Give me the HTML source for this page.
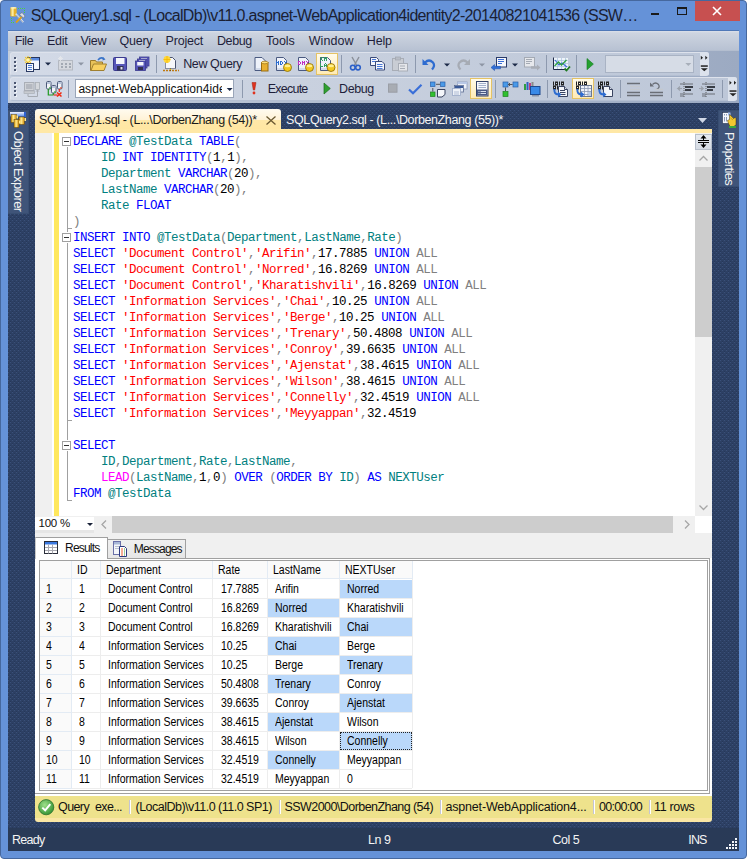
<!DOCTYPE html><html><head><meta charset="utf-8"><style>
*{margin:0;padding:0;box-sizing:border-box}
html,body{width:747px;height:859px;overflow:hidden;background:#FFFFFF}
body{position:relative;font-family:"Liberation Sans",sans-serif}
body>div,.a{position:absolute}
.t{position:absolute;white-space:pre}
svg{position:absolute;overflow:visible}
</style></head><body><div style="left:0px;top:0px;width:747px;height:859px;background:#6592D8;border:1px solid #46689E;border-radius:4px"></div>
<svg style="left:0;top:0" width="30" height="30" viewBox="0 0 30 30"><g fill="#4CD040"><rect x="18" y="8" width="1" height="1"/><rect x="20" y="8" width="1" height="1"/><rect x="22" y="8" width="1" height="1"/><rect x="24" y="8" width="1" height="1"/><rect x="24" y="10" width="1" height="1"/><rect x="24" y="12" width="1" height="1"/><rect x="11" y="18" width="1" height="1"/><rect x="11" y="20" width="1" height="1"/><rect x="11" y="22" width="1" height="1"/><rect x="13" y="22" width="1" height="1"/></g><rect x="10.3" y="7.5" width="6.4" height="9" rx="1" fill="#E9B42E"/><rect x="11.5" y="8" width="2.2" height="8" fill="#FCEBA0"/><ellipse cx="13.5" cy="7.8" rx="3.1" ry="0.9" fill="#FFF2B8"/><path d="M15.8 13.8L23.3 22.3" stroke="#E8ECF2" stroke-width="1.6"/><path d="M16.2 14.6L23 22.4" stroke="#606A78" stroke-width=".5"/><path d="M16 22.5L21.5 17" stroke="#E0A018" stroke-width="1.8"/><path d="M19.5 14.5l2.5-2l3 3.5l-1.5 2z" fill="#D8DCE4" stroke="#5A6270" stroke-width=".5"/></svg>
<div class="t" style="left:30.80px;top:7.86px;font-size:16px;line-height:16px;color:#1B1F33;letter-spacing:-0.689px;font-family:'Liberation Sans',monospace;">SQLQuery1.sql - (LocalDb)\v11.0.aspnet-WebApplication4identity2-20140821041536 (SSW…</div>
<div style="left:651px;top:13px;width:8px;height:2px;background:#1a1a1a"></div>
<div style="left:677px;top:7px;width:10px;height:8px;border:1px solid #1a1a1a;border-top-width:2px"></div>
<div style="left:695px;top:1px;width:45px;height:20px;background:#C75050"></div>
<svg style="left:712px;top:6px" width="10" height="10" viewBox="0 0 10 10"><path d="M1 1L9 9M9 1L1 9" stroke="#fff" stroke-width="1.6"/></svg>
<div style="left:8px;top:30px;width:731px;height:1px;background:#4F78B8"></div>
<div style="left:8px;top:31px;width:731px;height:20px;background:linear-gradient(#DCE0E9 0px,#CDD4E0 2px,#B8C2D3 19px,#AEB9CB 20px)"></div>
<div class="t" style="left:14.70px;top:35.32px;font-size:12.5px;line-height:12.5px;color:#1E1E3A;letter-spacing:-0.364px;font-family:'Liberation Sans',monospace;">File</div>
<div class="t" style="left:46.90px;top:35.32px;font-size:12.5px;line-height:12.5px;color:#1E1E3A;letter-spacing:-0.262px;font-family:'Liberation Sans',monospace;">Edit</div>
<div class="t" style="left:80.50px;top:35.32px;font-size:12.5px;line-height:12.5px;color:#1E1E3A;letter-spacing:-0.298px;font-family:'Liberation Sans',monospace;">View</div>
<div class="t" style="left:119.50px;top:35.32px;font-size:12.5px;line-height:12.5px;color:#1E1E3A;letter-spacing:-0.246px;font-family:'Liberation Sans',monospace;">Query</div>
<div class="t" style="left:165.50px;top:35.32px;font-size:12.5px;line-height:12.5px;color:#1E1E3A;letter-spacing:-0.187px;font-family:'Liberation Sans',monospace;">Project</div>
<div class="t" style="left:216.90px;top:35.32px;font-size:12.5px;line-height:12.5px;color:#1E1E3A;letter-spacing:-0.369px;font-family:'Liberation Sans',monospace;">Debug</div>
<div class="t" style="left:265.90px;top:35.32px;font-size:12.5px;line-height:12.5px;color:#1E1E3A;letter-spacing:-0.077px;font-family:'Liberation Sans',monospace;">Tools</div>
<div class="t" style="left:308.70px;top:35.32px;font-size:12.5px;line-height:12.5px;color:#1E1E3A;letter-spacing:0.072px;font-family:'Liberation Sans',monospace;">Window</div>
<div class="t" style="left:366.80px;top:35.32px;font-size:12.5px;line-height:12.5px;color:#1E1E3A;letter-spacing:-0.155px;font-family:'Liberation Sans',monospace;">Help</div>
<div style="left:8px;top:51px;width:731px;height:52px;background:linear-gradient(to right,#C3CDDC,#9CAAC2)"></div>
<div style="left:10px;top:52px;width:699px;height:24px;background:linear-gradient(to right,#D3DAE7,#C9D1DF 40%,#BDC7D8);border-radius:3px;border:1px solid #DDE2EC;border-bottom-color:#B4BFD2"></div>
<div style="left:14px;top:57px;width:2px;height:2px;background:#4A5570;box-shadow:1px 1px 0 #EEF2F8"></div>
<div style="left:14px;top:61px;width:2px;height:2px;background:#4A5570;box-shadow:1px 1px 0 #EEF2F8"></div>
<div style="left:14px;top:65px;width:2px;height:2px;background:#4A5570;box-shadow:1px 1px 0 #EEF2F8"></div>
<div style="left:14px;top:69px;width:2px;height:2px;background:#4A5570;box-shadow:1px 1px 0 #EEF2F8"></div>
<div style="left:700px;top:52px;width:9px;height:24px;background:#DCE2EC;border-radius:0 3px 3px 0"></div>
<div style="left:10px;top:77px;width:727px;height:24px;background:linear-gradient(to right,#D3DAE7,#C9D1DF 40%,#BDC7D8);border-radius:3px;border:1px solid #DDE2EC;border-bottom-color:#B4BFD2"></div>
<div style="left:14px;top:82px;width:2px;height:2px;background:#4A5570;box-shadow:1px 1px 0 #EEF2F8"></div>
<div style="left:14px;top:86px;width:2px;height:2px;background:#4A5570;box-shadow:1px 1px 0 #EEF2F8"></div>
<div style="left:14px;top:90px;width:2px;height:2px;background:#4A5570;box-shadow:1px 1px 0 #EEF2F8"></div>
<div style="left:14px;top:94px;width:2px;height:2px;background:#4A5570;box-shadow:1px 1px 0 #EEF2F8"></div>
<div style="left:728px;top:77px;width:9px;height:24px;background:#DCE2EC;border-radius:0 3px 3px 0"></div>
<div style="left:8px;top:103px;width:731px;height:725px;background-color:#2D4064;background-image:conic-gradient(from 90deg at 1px 1px,transparent 0 50%,#26385A 50% 75%,transparent 75%),conic-gradient(from 90deg at 1px 1px,transparent 0 50%,#26385A 50% 75%,transparent 75%),conic-gradient(from 90deg at 1px 2px,transparent 0 50%,#3A5079 50% 75%,transparent 75%),conic-gradient(from 90deg at 1px 2px,transparent 0 50%,#3A5079 50% 75%,transparent 75%);background-size:4px 4px;background-position:0 0,2px 2px,0 0,2px 2px"></div>
<div style="left:8px;top:828px;width:731px;height:23px;background:#293A57"></div>
<div class="t" style="left:12.00px;top:834.22px;font-size:12.5px;line-height:12.5px;color:#F4F4F4;letter-spacing:-0.728px;font-family:'Liberation Sans',monospace;">Ready</div>
<div class="t" style="left:368.10px;top:834.22px;font-size:12.5px;line-height:12.5px;color:#F4F4F4;letter-spacing:-0.482px;font-family:'Liberation Sans',monospace;">Ln 9</div>
<div class="t" style="left:552.50px;top:834.22px;font-size:12.5px;line-height:12.5px;color:#F4F4F4;letter-spacing:-0.498px;font-family:'Liberation Sans',monospace;">Col 5</div>
<div class="t" style="left:688.30px;top:834.22px;font-size:12.5px;line-height:12.5px;color:#F4F4F4;letter-spacing:-0.881px;font-family:'Liberation Sans',monospace;">INS</div>
<div style="left:735px;top:838px;width:2px;height:2px;background:#F2F5FA"></div>
<div style="left:732px;top:841px;width:2px;height:2px;background:#F2F5FA"></div>
<div style="left:735px;top:841px;width:2px;height:2px;background:#F2F5FA"></div>
<div style="left:729px;top:844px;width:2px;height:2px;background:#F2F5FA"></div>
<div style="left:732px;top:844px;width:2px;height:2px;background:#F2F5FA"></div>
<div style="left:735px;top:844px;width:2px;height:2px;background:#F2F5FA"></div>
<div style="left:726px;top:847px;width:2px;height:2px;background:#F2F5FA"></div>
<div style="left:729px;top:847px;width:2px;height:2px;background:#F2F5FA"></div>
<div style="left:732px;top:847px;width:2px;height:2px;background:#F2F5FA"></div>
<div style="left:735px;top:847px;width:2px;height:2px;background:#F2F5FA"></div>
<div style="left:8px;top:110px;width:20.5px;height:104px;background:#3F5479;border:1px solid #384E72;border-left:none"></div>
<div style="left:718px;top:110px;width:21px;height:77px;background:#3F5479;border:1px solid #384E72;border-right:none"></div>
<svg style="left:0;top:0" width="30" height="135" viewBox="0 0 30 135"><defs><linearGradient id="oeb" x1="0" x2="0" y1="0" y2="1"><stop offset="0" stop-color="#F0F4FF"/><stop offset="1" stop-color="#5A8CE8"/></linearGradient><linearGradient id="gold" x1="0" x2="1"><stop offset="0" stop-color="#D89A10"/><stop offset=".45" stop-color="#FFE68A"/><stop offset="1" stop-color="#D08A00"/></linearGradient></defs><rect x="10" y="112" width="16" height="4.5" fill="url(#oeb)"/><rect x="24" y="112" width="2" height="5" fill="#2F62D0"/><rect x="11" y="114.5" width="5.5" height="8" fill="url(#gold)" stroke="#5A4008" stroke-width=".5"/><rect x="16.5" y="115.5" width="1.5" height="3" fill="#FFE88A"/><rect x="19" y="117" width="5.5" height="7.5" fill="url(#gold)" stroke="#5A4008" stroke-width=".5"/><rect x="24.5" y="118" width="1.5" height="3" fill="#FFE88A"/><rect x="14" y="119.5" width="5" height="8" fill="url(#gold)" stroke="#5A4008" stroke-width=".5"/><rect x="19" y="120.5" width="1.5" height="3" fill="#FFE88A"/></svg>
<svg style="left:700px;top:100px" width="47" height="35" viewBox="700 100 47 35"><rect x="722.5" y="112.5" width="8" height="11" fill="#F4F7FC" stroke="#26334F" stroke-width=".6"/><rect x="728" y="112.5" width="2.5" height="3" fill="#9AB8EC"/><path d="M724.5 114v1.5M726.5 114v1.5M724.5 117v4.5M726.5 117v4.5" stroke="#8A98B8" stroke-width="1"/><path d="M729.5 114.5l4 4 1.5-1 1 1v6l-2 2h-4l-1.5-3 -1-3 2-1z" fill="#F2C830" stroke="#3A3010" stroke-width=".5"/><path d="M730 115l3 3M730.5 118l2.5 2" stroke="#B08A10" stroke-width=".6"/><rect x="729" y="126" width="7" height="2" fill="#3CA83C"/></svg>
<div class="t" style="left:11.6px;top:131.2px;width:90px;height:13px;transform-origin:0 0;transform:translate(13px,0) rotate(90deg);font-size:13px;line-height:13px;color:#F4F4F4;letter-spacing:-0.6px">Object Explorer</div>
<div class="t" style="left:722.5px;top:131.5px;width:60px;height:13px;transform-origin:0 0;transform:translate(13px,0) rotate(90deg);font-size:13px;line-height:13px;color:#F4F4F4;letter-spacing:-0.6px">Properties</div>
<div style="left:35px;top:109px;width:246px;height:24px;background:linear-gradient(#FFFBF0,#FFF2D6 46%,#FFE8A8 46%,#FFE6A0);border-radius:3px 3px 0 0"></div>
<div class="t" style="left:39.00px;top:113.72px;font-size:12.5px;line-height:12.5px;color:#1A1A1A;letter-spacing:-0.372px;font-family:'Liberation Sans',monospace;">SQLQuery1.sql - (L...\DorbenZhang (54))*</div>
<svg style="left:266px;top:116px" width="10" height="9" viewBox="0 0 10 9"><path d="M0.5 0.5L9.5 8.5M9.5 0.5L0.5 8.5" stroke="#6A5830" stroke-width="1.3"/></svg>
<div class="t" style="left:286.10px;top:113.72px;font-size:12.5px;line-height:12.5px;color:#F4F4F4;letter-spacing:-0.395px;font-family:'Liberation Sans',monospace;">SQLQuery2.sql - (L...\DorbenZhang (55))*</div>
<svg style="left:698px;top:118px" width="9" height="5" viewBox="0 0 9 5"><path d="M0 0H9L4.5 5Z" fill="#D0D8E6"/></svg>
<div style="left:35px;top:129px;width:677px;height:4px;background:#FFE8A6"></div>
<div style="left:35px;top:133px;width:677px;height:383px;background:#FFFFFF"></div>
<div style="left:35px;top:133px;width:17px;height:383px;background:#F0F0F0"></div>
<div style="left:54.3px;top:133px;width:5.2px;height:383px;background:#FFE85E"></div>
<div style="left:695px;top:133px;width:17px;height:383px;background:#F0F0F0"></div>
<div style="left:695px;top:133.5px;width:16.5px;height:16px;background:linear-gradient(#E6EAF0,#D4DAE3);border:1px solid #B8C0CC"></div>
<svg style="left:697px;top:134px" width="13" height="15" viewBox="0 0 13 15"><path d="M1 6.5H12M1 8.5H12" stroke="#000" stroke-width="1"/><path d="M6.5 1L3.5 4.5H9.5Z M6.5 14L3.5 10.5H9.5Z" fill="#000"/><path d="M6.5 3V6M6.5 9V12" stroke="#000"/></svg>
<svg style="left:699px;top:155px" width="9" height="6" viewBox="0 0 9 6"><path d="M0.5 5.5L4.5 1.5L8.5 5.5" stroke="#A6A6A6" stroke-width="1.3" fill="none"/></svg>
<div style="left:695px;top:167px;width:17px;height:170px;background:#CDCDCD"></div>
<svg style="left:699px;top:505px" width="9" height="6" viewBox="0 0 9 6"><path d="M0.5 0.5L4.5 4.5L8.5 0.5" stroke="#A6A6A6" stroke-width="1.3" fill="none"/></svg>
<div style="left:35px;top:516px;width:677px;height:17px;background:#F0F0F0"></div>
<div style="left:35px;top:516.5px;width:59px;height:13.5px;background:#FFFFFF"></div>
<div style="left:35px;top:530px;width:59px;height:3px;background:#E6E6E6"></div>
<div class="t" style="left:38.50px;top:518.07px;font-size:11.5px;line-height:11.5px;color:#111;letter-spacing:-0.216px;font-family:'Liberation Sans',monospace;">100 %</div>
<svg style="left:86.5px;top:523px" width="6" height="3" viewBox="0 0 6 3"><path d="M0 0H6L3 3Z" fill="#1A2238"/></svg>
<svg style="left:101px;top:520px" width="6" height="9" viewBox="0 0 6 9"><path d="M5 0.5L1 4.5L5 8.5" stroke="#A6A6A6" stroke-width="1.3" fill="none"/></svg>
<div style="left:112px;top:516px;width:561px;height:17px;background:#CDCDCD"></div>
<svg style="left:684px;top:520px" width="6" height="9" viewBox="0 0 6 9"><path d="M1 0.5L5 4.5L1 8.5" stroke="#A6A6A6" stroke-width="1.3" fill="none"/></svg>
<div style="left:695px;top:516px;width:17px;height:17px;background:#FFFFFF"></div>
<div class="t" style="left:73px;top:136.12px;font-family:'Liberation Mono',monospace;font-size:12.5px;line-height:12.5px;letter-spacing:-0.500px"><span style="color:#0000FF">DECLARE</span> <span style="color:#008080">@TestData</span> <span style="color:#0000FF">TABLE</span><span style="color:#808080">(</span></div>
<div class="t" style="left:73px;top:152.12px;font-family:'Liberation Mono',monospace;font-size:12.5px;line-height:12.5px;letter-spacing:-0.500px">    <span style="color:#008080">ID</span> <span style="color:#0000FF">INT</span> <span style="color:#0000FF">IDENTITY</span><span style="color:#808080">(</span><span style="color:#000000">1</span><span style="color:#808080">,</span><span style="color:#000000">1</span><span style="color:#808080">)</span><span style="color:#808080">,</span></div>
<div class="t" style="left:73px;top:168.12px;font-family:'Liberation Mono',monospace;font-size:12.5px;line-height:12.5px;letter-spacing:-0.500px">    <span style="color:#008080">Department</span> <span style="color:#0000FF">VARCHAR</span><span style="color:#808080">(</span><span style="color:#000000">20</span><span style="color:#808080">)</span><span style="color:#808080">,</span></div>
<div class="t" style="left:73px;top:184.12px;font-family:'Liberation Mono',monospace;font-size:12.5px;line-height:12.5px;letter-spacing:-0.500px">    <span style="color:#008080">LastName</span> <span style="color:#0000FF">VARCHAR</span><span style="color:#808080">(</span><span style="color:#000000">20</span><span style="color:#808080">)</span><span style="color:#808080">,</span></div>
<div class="t" style="left:73px;top:200.12px;font-family:'Liberation Mono',monospace;font-size:12.5px;line-height:12.5px;letter-spacing:-0.500px">    <span style="color:#008080">Rate</span> <span style="color:#0000FF">FLOAT</span></div>
<div class="t" style="left:73px;top:216.12px;font-family:'Liberation Mono',monospace;font-size:12.5px;line-height:12.5px;letter-spacing:-0.500px"><span style="color:#808080">)</span></div>
<div class="t" style="left:73px;top:232.12px;font-family:'Liberation Mono',monospace;font-size:12.5px;line-height:12.5px;letter-spacing:-0.500px"><span style="color:#0000FF">INSERT</span> <span style="color:#0000FF">INTO</span> <span style="color:#008080">@TestData</span><span style="color:#808080">(</span><span style="color:#008080">Department</span><span style="color:#808080">,</span><span style="color:#008080">LastName</span><span style="color:#808080">,</span><span style="color:#008080">Rate</span><span style="color:#808080">)</span></div>
<div class="t" style="left:73px;top:248.12px;font-family:'Liberation Mono',monospace;font-size:12.5px;line-height:12.5px;letter-spacing:-0.500px"><span style="color:#0000FF">SELECT</span> <span style="color:#FF0000">&#x27;Document Control&#x27;</span><span style="color:#808080">,</span><span style="color:#FF0000">&#x27;Arifin&#x27;</span><span style="color:#808080">,</span><span style="color:#000000">17.7885</span> <span style="color:#0000FF">UNION</span> <span style="color:#808080">ALL</span></div>
<div class="t" style="left:73px;top:264.12px;font-family:'Liberation Mono',monospace;font-size:12.5px;line-height:12.5px;letter-spacing:-0.500px"><span style="color:#0000FF">SELECT</span> <span style="color:#FF0000">&#x27;Document Control&#x27;</span><span style="color:#808080">,</span><span style="color:#FF0000">&#x27;Norred&#x27;</span><span style="color:#808080">,</span><span style="color:#000000">16.8269</span> <span style="color:#0000FF">UNION</span> <span style="color:#808080">ALL</span></div>
<div class="t" style="left:73px;top:280.12px;font-family:'Liberation Mono',monospace;font-size:12.5px;line-height:12.5px;letter-spacing:-0.500px"><span style="color:#0000FF">SELECT</span> <span style="color:#FF0000">&#x27;Document Control&#x27;</span><span style="color:#808080">,</span><span style="color:#FF0000">&#x27;Kharatishvili&#x27;</span><span style="color:#808080">,</span><span style="color:#000000">16.8269</span> <span style="color:#0000FF">UNION</span> <span style="color:#808080">ALL</span></div>
<div class="t" style="left:73px;top:296.12px;font-family:'Liberation Mono',monospace;font-size:12.5px;line-height:12.5px;letter-spacing:-0.500px"><span style="color:#0000FF">SELECT</span> <span style="color:#FF0000">&#x27;Information Services&#x27;</span><span style="color:#808080">,</span><span style="color:#FF0000">&#x27;Chai&#x27;</span><span style="color:#808080">,</span><span style="color:#000000">10.25</span> <span style="color:#0000FF">UNION</span> <span style="color:#808080">ALL</span></div>
<div class="t" style="left:73px;top:312.12px;font-family:'Liberation Mono',monospace;font-size:12.5px;line-height:12.5px;letter-spacing:-0.500px"><span style="color:#0000FF">SELECT</span> <span style="color:#FF0000">&#x27;Information Services&#x27;</span><span style="color:#808080">,</span><span style="color:#FF0000">&#x27;Berge&#x27;</span><span style="color:#808080">,</span><span style="color:#000000">10.25</span> <span style="color:#0000FF">UNION</span> <span style="color:#808080">ALL</span></div>
<div class="t" style="left:73px;top:328.12px;font-family:'Liberation Mono',monospace;font-size:12.5px;line-height:12.5px;letter-spacing:-0.500px"><span style="color:#0000FF">SELECT</span> <span style="color:#FF0000">&#x27;Information Services&#x27;</span><span style="color:#808080">,</span><span style="color:#FF0000">&#x27;Trenary&#x27;</span><span style="color:#808080">,</span><span style="color:#000000">50.4808</span> <span style="color:#0000FF">UNION</span> <span style="color:#808080">ALL</span></div>
<div class="t" style="left:73px;top:344.12px;font-family:'Liberation Mono',monospace;font-size:12.5px;line-height:12.5px;letter-spacing:-0.500px"><span style="color:#0000FF">SELECT</span> <span style="color:#FF0000">&#x27;Information Services&#x27;</span><span style="color:#808080">,</span><span style="color:#FF0000">&#x27;Conroy&#x27;</span><span style="color:#808080">,</span><span style="color:#000000">39.6635</span> <span style="color:#0000FF">UNION</span> <span style="color:#808080">ALL</span></div>
<div class="t" style="left:73px;top:360.12px;font-family:'Liberation Mono',monospace;font-size:12.5px;line-height:12.5px;letter-spacing:-0.500px"><span style="color:#0000FF">SELECT</span> <span style="color:#FF0000">&#x27;Information Services&#x27;</span><span style="color:#808080">,</span><span style="color:#FF0000">&#x27;Ajenstat&#x27;</span><span style="color:#808080">,</span><span style="color:#000000">38.4615</span> <span style="color:#0000FF">UNION</span> <span style="color:#808080">ALL</span></div>
<div class="t" style="left:73px;top:376.12px;font-family:'Liberation Mono',monospace;font-size:12.5px;line-height:12.5px;letter-spacing:-0.500px"><span style="color:#0000FF">SELECT</span> <span style="color:#FF0000">&#x27;Information Services&#x27;</span><span style="color:#808080">,</span><span style="color:#FF0000">&#x27;Wilson&#x27;</span><span style="color:#808080">,</span><span style="color:#000000">38.4615</span> <span style="color:#0000FF">UNION</span> <span style="color:#808080">ALL</span></div>
<div class="t" style="left:73px;top:392.12px;font-family:'Liberation Mono',monospace;font-size:12.5px;line-height:12.5px;letter-spacing:-0.500px"><span style="color:#0000FF">SELECT</span> <span style="color:#FF0000">&#x27;Information Services&#x27;</span><span style="color:#808080">,</span><span style="color:#FF0000">&#x27;Connelly&#x27;</span><span style="color:#808080">,</span><span style="color:#000000">32.4519</span> <span style="color:#0000FF">UNION</span> <span style="color:#808080">ALL</span></div>
<div class="t" style="left:73px;top:408.12px;font-family:'Liberation Mono',monospace;font-size:12.5px;line-height:12.5px;letter-spacing:-0.500px"><span style="color:#0000FF">SELECT</span> <span style="color:#FF0000">&#x27;Information Services&#x27;</span><span style="color:#808080">,</span><span style="color:#FF0000">&#x27;Meyyappan&#x27;</span><span style="color:#808080">,</span><span style="color:#000000">32.4519</span></div>
<div class="t" style="left:73px;top:424.12px;font-family:'Liberation Mono',monospace;font-size:12.5px;line-height:12.5px;letter-spacing:-0.500px"></div>
<div class="t" style="left:73px;top:440.12px;font-family:'Liberation Mono',monospace;font-size:12.5px;line-height:12.5px;letter-spacing:-0.500px"><span style="color:#0000FF">SELECT</span></div>
<div class="t" style="left:73px;top:456.12px;font-family:'Liberation Mono',monospace;font-size:12.5px;line-height:12.5px;letter-spacing:-0.500px">    <span style="color:#008080">ID</span><span style="color:#808080">,</span><span style="color:#008080">Department</span><span style="color:#808080">,</span><span style="color:#008080">Rate</span><span style="color:#808080">,</span><span style="color:#008080">LastName</span><span style="color:#808080">,</span></div>
<div class="t" style="left:73px;top:472.12px;font-family:'Liberation Mono',monospace;font-size:12.5px;line-height:12.5px;letter-spacing:-0.500px">    <span style="color:#FF00FF">LEAD</span><span style="color:#808080">(</span><span style="color:#008080">LastName</span><span style="color:#808080">,</span><span style="color:#000000">1</span><span style="color:#808080">,</span><span style="color:#000000">0</span><span style="color:#808080">)</span> <span style="color:#0000FF">OVER</span> <span style="color:#808080">(</span><span style="color:#0000FF">ORDER</span> <span style="color:#0000FF">BY</span> <span style="color:#008080">ID</span><span style="color:#808080">)</span> <span style="color:#0000FF">AS</span> <span style="color:#008080">NEXTUser</span></div>
<div class="t" style="left:73px;top:488.12px;font-family:'Liberation Mono',monospace;font-size:12.5px;line-height:12.5px;letter-spacing:-0.500px"><span style="color:#0000FF">FROM</span> <span style="color:#008080">@TestData</span></div>
<div style="left:62px;top:137px;width:9px;height:9px;background:#fff;border:1px solid #A0A0A0"></div>
<div style="left:64px;top:141px;width:5px;height:1px;background:#333"></div>
<div style="left:62px;top:233px;width:9px;height:9px;background:#fff;border:1px solid #A0A0A0"></div>
<div style="left:64px;top:237px;width:5px;height:1px;background:#333"></div>
<div style="left:62px;top:441px;width:9px;height:9px;background:#fff;border:1px solid #A0A0A0"></div>
<div style="left:64px;top:445px;width:5px;height:1px;background:#333"></div>
<div style="left:67px;top:147px;width:1px;height:85px;background:#A0A0A0"></div>
<div style="left:67px;top:228px;width:5px;height:1px;background:#A0A0A0"></div>
<div style="left:67px;top:243px;width:1px;height:197px;background:#A0A0A0"></div>
<div style="left:67px;top:420px;width:5px;height:1px;background:#A0A0A0"></div>
<div style="left:67px;top:451px;width:1px;height:50px;background:#A0A0A0"></div>
<div style="left:67px;top:500px;width:5px;height:1px;background:#A0A0A0"></div>
<div style="left:35px;top:533px;width:677px;height:262.5px;background:#F0F0F0"></div>
<div style="left:35px;top:558px;width:677px;height:237.5px;background:#FFFFFF"></div>
<div style="left:107px;top:558px;width:603px;height:1px;background:#A0A0A0"></div>
<div style="left:709px;top:558px;width:1px;height:236px;background:#A0A0A0"></div>
<div style="left:35px;top:793px;width:675px;height:1px;background:#A0A0A0"></div>
<div style="left:107px;top:539px;width:79px;height:20px;background:linear-gradient(#F0F0F0,#E6E6E6);border:1px solid #A0A0A0"></div>
<div style="left:35px;top:537px;width:73px;height:22px;background:#FFFFFF;border:1px solid #A0A0A0;border-bottom:none;border-left-color:#C8C8C8"></div>
<svg style="left:0;top:530px" width="200" height="30" viewBox="0 530 200 30"><rect x="44.5" y="541.5" width="13" height="12" fill="#FFFFFF" stroke="#2A2E3A"/><rect x="45" y="542" width="12" height="2.5" fill="#3A78E0"/><path d="M45 547.5h12M45 550.5h12M48.5 544.5v9M52.5 544.5v9" stroke="#A8A8B0"/><rect x="113.5" y="541.5" width="7" height="13" fill="#F4F6FA" stroke="#6A70A8"/><rect x="114" y="542" width="6" height="2.5" fill="#A8B8D8"/><path d="M115 546.5h4M115 548.5h4" stroke="#B8C0D0"/><path d="M119.5 546.5h5l2 2v8h-7z" fill="#FFFFFF" stroke="#2E3A80"/><path d="M121 549h2M121 551h2M121 553h2M121 555h2" stroke="#F05A28"/><path d="M124 549h1M124 551h1M124 553h1M124 555h1" stroke="#3A9A3A"/></svg>
<div class="t" style="left:65.00px;top:541.84px;font-size:12px;line-height:12px;color:#111;letter-spacing:-0.788px;font-family:'Liberation Sans',monospace;">Results</div>
<div class="t" style="left:133.80px;top:543.34px;font-size:12px;line-height:12px;color:#111;letter-spacing:-0.848px;font-family:'Liberation Sans',monospace;">Messages</div>
<div style="left:39px;top:560px;width:669px;height:231px;border:1px solid #A0A0A0"></div>
<div style="left:40px;top:561px;width:372px;height:18px;background:#FAFAFA"></div>
<div style="left:40px;top:579px;width:31.5px;height:209px;background:#FAFAFA"></div>
<div style="left:71.0px;top:561px;width:1px;height:18px;background:#E3EBF4"></div>
<div style="left:99.5px;top:561px;width:1px;height:18px;background:#E3EBF4"></div>
<div style="left:212.0px;top:561px;width:1px;height:18px;background:#E3EBF4"></div>
<div style="left:267.0px;top:561px;width:1px;height:18px;background:#E3EBF4"></div>
<div style="left:339.0px;top:561px;width:1px;height:18px;background:#E3EBF4"></div>
<div style="left:411.5px;top:561px;width:1px;height:18px;background:#E3EBF4"></div>
<div style="left:40px;top:578px;width:372px;height:1px;background:#E3EBF4"></div>
<div style="left:340px;top:580px;width:71.5px;height:18px;background:#BAD8FA"></div>
<div style="left:268px;top:599px;width:71px;height:18px;background:#BAD8FA"></div>
<div style="left:340px;top:618px;width:71.5px;height:18px;background:#BAD8FA"></div>
<div style="left:268px;top:637px;width:71px;height:18px;background:#BAD8FA"></div>
<div style="left:340px;top:656px;width:71.5px;height:18px;background:#BAD8FA"></div>
<div style="left:268px;top:675px;width:71px;height:18px;background:#BAD8FA"></div>
<div style="left:340px;top:694px;width:71.5px;height:18px;background:#BAD8FA"></div>
<div style="left:268px;top:713px;width:71px;height:18px;background:#BAD8FA"></div>
<div style="left:340px;top:732px;width:71.5px;height:18px;background:#BAD8FA"></div>
<div style="left:340px;top:732px;width:71.5px;height:18px;border:1px dotted #222"></div>
<div style="left:268px;top:751px;width:71px;height:18px;background:#BAD8FA"></div>
<div style="left:71.5px;top:597.5px;width:340.5px;height:1px;background:#EDEDED"></div>
<div style="left:40px;top:597.5px;width:31.5px;height:1px;background:#E3EBF4"></div>
<div style="left:71.5px;top:616.5px;width:340.5px;height:1px;background:#EDEDED"></div>
<div style="left:40px;top:616.5px;width:31.5px;height:1px;background:#E3EBF4"></div>
<div style="left:71.5px;top:635.5px;width:340.5px;height:1px;background:#EDEDED"></div>
<div style="left:40px;top:635.5px;width:31.5px;height:1px;background:#E3EBF4"></div>
<div style="left:71.5px;top:654.5px;width:340.5px;height:1px;background:#EDEDED"></div>
<div style="left:40px;top:654.5px;width:31.5px;height:1px;background:#E3EBF4"></div>
<div style="left:71.5px;top:673.5px;width:340.5px;height:1px;background:#EDEDED"></div>
<div style="left:40px;top:673.5px;width:31.5px;height:1px;background:#E3EBF4"></div>
<div style="left:71.5px;top:692.5px;width:340.5px;height:1px;background:#EDEDED"></div>
<div style="left:40px;top:692.5px;width:31.5px;height:1px;background:#E3EBF4"></div>
<div style="left:71.5px;top:711.5px;width:340.5px;height:1px;background:#EDEDED"></div>
<div style="left:40px;top:711.5px;width:31.5px;height:1px;background:#E3EBF4"></div>
<div style="left:71.5px;top:730.5px;width:340.5px;height:1px;background:#EDEDED"></div>
<div style="left:40px;top:730.5px;width:31.5px;height:1px;background:#E3EBF4"></div>
<div style="left:71.5px;top:749.5px;width:340.5px;height:1px;background:#EDEDED"></div>
<div style="left:40px;top:749.5px;width:31.5px;height:1px;background:#E3EBF4"></div>
<div style="left:71.5px;top:768.5px;width:340.5px;height:1px;background:#EDEDED"></div>
<div style="left:40px;top:768.5px;width:31.5px;height:1px;background:#E3EBF4"></div>
<div style="left:71.5px;top:787.5px;width:340.5px;height:1px;background:#EDEDED"></div>
<div style="left:40px;top:787.5px;width:31.5px;height:1px;background:#E3EBF4"></div>
<div style="left:71.0px;top:579px;width:1px;height:209px;background:#EDEDED"></div>
<div style="left:99.5px;top:579px;width:1px;height:209px;background:#EDEDED"></div>
<div style="left:212.0px;top:579px;width:1px;height:209px;background:#EDEDED"></div>
<div style="left:267.0px;top:579px;width:1px;height:209px;background:#EDEDED"></div>
<div style="left:339.0px;top:579px;width:1px;height:209px;background:#EDEDED"></div>
<div style="left:411.5px;top:579px;width:1px;height:209px;background:#EDEDED"></div>
<div style="left:71px;top:579px;width:1px;height:209px;background:#E3EBF4"></div>
<div class="t" style="left:76.90px;top:563.64px;font-size:12px;line-height:12px;color:#000;transform-origin:0 0;transform:scaleX(0.875)">ID</div>
<div class="t" style="left:105.90px;top:563.64px;font-size:12px;line-height:12px;color:#000;transform-origin:0 0;transform:scaleX(0.875)">Department</div>
<div class="t" style="left:217.90px;top:563.64px;font-size:12px;line-height:12px;color:#000;transform-origin:0 0;transform:scaleX(0.875)">Rate</div>
<div class="t" style="left:273.20px;top:563.64px;font-size:12px;line-height:12px;color:#000;transform-origin:0 0;transform:scaleX(0.875)">LastName</div>
<div class="t" style="left:345.10px;top:563.64px;font-size:12px;line-height:12px;color:#000;transform-origin:0 0;transform:scaleX(0.875)">NEXTUser</div>
<div class="t" style="left:45.90px;top:583.44px;font-size:12px;line-height:12px;color:#000;transform-origin:0 0;transform:scaleX(0.875)">1</div>
<div class="t" style="left:79.40px;top:583.44px;font-size:12px;line-height:12px;color:#000;transform-origin:0 0;transform:scaleX(0.875)">1</div>
<div class="t" style="left:108.20px;top:583.44px;font-size:12px;line-height:12px;color:#000;transform-origin:0 0;transform:scaleX(0.875)">Document Control</div>
<div class="t" style="left:220.50px;top:583.44px;font-size:12px;line-height:12px;color:#000;transform-origin:0 0;transform:scaleX(0.875)">17.7885</div>
<div class="t" style="left:274.90px;top:583.44px;font-size:12px;line-height:12px;color:#000;transform-origin:0 0;transform:scaleX(0.875)">Arifin</div>
<div class="t" style="left:347.30px;top:583.44px;font-size:12px;line-height:12px;color:#000;transform-origin:0 0;transform:scaleX(0.875)">Norred</div>
<div class="t" style="left:45.90px;top:602.44px;font-size:12px;line-height:12px;color:#000;transform-origin:0 0;transform:scaleX(0.875)">2</div>
<div class="t" style="left:79.40px;top:602.44px;font-size:12px;line-height:12px;color:#000;transform-origin:0 0;transform:scaleX(0.875)">2</div>
<div class="t" style="left:108.20px;top:602.44px;font-size:12px;line-height:12px;color:#000;transform-origin:0 0;transform:scaleX(0.875)">Document Control</div>
<div class="t" style="left:220.50px;top:602.44px;font-size:12px;line-height:12px;color:#000;transform-origin:0 0;transform:scaleX(0.875)">16.8269</div>
<div class="t" style="left:274.90px;top:602.44px;font-size:12px;line-height:12px;color:#000;transform-origin:0 0;transform:scaleX(0.875)">Norred</div>
<div class="t" style="left:347.30px;top:602.44px;font-size:12px;line-height:12px;color:#000;transform-origin:0 0;transform:scaleX(0.875)">Kharatishvili</div>
<div class="t" style="left:45.90px;top:621.44px;font-size:12px;line-height:12px;color:#000;transform-origin:0 0;transform:scaleX(0.875)">3</div>
<div class="t" style="left:79.40px;top:621.44px;font-size:12px;line-height:12px;color:#000;transform-origin:0 0;transform:scaleX(0.875)">3</div>
<div class="t" style="left:108.20px;top:621.44px;font-size:12px;line-height:12px;color:#000;transform-origin:0 0;transform:scaleX(0.875)">Document Control</div>
<div class="t" style="left:220.50px;top:621.44px;font-size:12px;line-height:12px;color:#000;transform-origin:0 0;transform:scaleX(0.875)">16.8269</div>
<div class="t" style="left:274.90px;top:621.44px;font-size:12px;line-height:12px;color:#000;transform-origin:0 0;transform:scaleX(0.875)">Kharatishvili</div>
<div class="t" style="left:347.30px;top:621.44px;font-size:12px;line-height:12px;color:#000;transform-origin:0 0;transform:scaleX(0.875)">Chai</div>
<div class="t" style="left:45.90px;top:640.44px;font-size:12px;line-height:12px;color:#000;transform-origin:0 0;transform:scaleX(0.875)">4</div>
<div class="t" style="left:79.40px;top:640.44px;font-size:12px;line-height:12px;color:#000;transform-origin:0 0;transform:scaleX(0.875)">4</div>
<div class="t" style="left:108.20px;top:640.44px;font-size:12px;line-height:12px;color:#000;transform-origin:0 0;transform:scaleX(0.875)">Information Services</div>
<div class="t" style="left:220.50px;top:640.44px;font-size:12px;line-height:12px;color:#000;transform-origin:0 0;transform:scaleX(0.875)">10.25</div>
<div class="t" style="left:274.90px;top:640.44px;font-size:12px;line-height:12px;color:#000;transform-origin:0 0;transform:scaleX(0.875)">Chai</div>
<div class="t" style="left:347.30px;top:640.44px;font-size:12px;line-height:12px;color:#000;transform-origin:0 0;transform:scaleX(0.875)">Berge</div>
<div class="t" style="left:45.90px;top:659.44px;font-size:12px;line-height:12px;color:#000;transform-origin:0 0;transform:scaleX(0.875)">5</div>
<div class="t" style="left:79.40px;top:659.44px;font-size:12px;line-height:12px;color:#000;transform-origin:0 0;transform:scaleX(0.875)">5</div>
<div class="t" style="left:108.20px;top:659.44px;font-size:12px;line-height:12px;color:#000;transform-origin:0 0;transform:scaleX(0.875)">Information Services</div>
<div class="t" style="left:220.50px;top:659.44px;font-size:12px;line-height:12px;color:#000;transform-origin:0 0;transform:scaleX(0.875)">10.25</div>
<div class="t" style="left:274.90px;top:659.44px;font-size:12px;line-height:12px;color:#000;transform-origin:0 0;transform:scaleX(0.875)">Berge</div>
<div class="t" style="left:347.30px;top:659.44px;font-size:12px;line-height:12px;color:#000;transform-origin:0 0;transform:scaleX(0.875)">Trenary</div>
<div class="t" style="left:45.90px;top:678.44px;font-size:12px;line-height:12px;color:#000;transform-origin:0 0;transform:scaleX(0.875)">6</div>
<div class="t" style="left:79.40px;top:678.44px;font-size:12px;line-height:12px;color:#000;transform-origin:0 0;transform:scaleX(0.875)">6</div>
<div class="t" style="left:108.20px;top:678.44px;font-size:12px;line-height:12px;color:#000;transform-origin:0 0;transform:scaleX(0.875)">Information Services</div>
<div class="t" style="left:220.50px;top:678.44px;font-size:12px;line-height:12px;color:#000;transform-origin:0 0;transform:scaleX(0.875)">50.4808</div>
<div class="t" style="left:274.90px;top:678.44px;font-size:12px;line-height:12px;color:#000;transform-origin:0 0;transform:scaleX(0.875)">Trenary</div>
<div class="t" style="left:347.30px;top:678.44px;font-size:12px;line-height:12px;color:#000;transform-origin:0 0;transform:scaleX(0.875)">Conroy</div>
<div class="t" style="left:45.90px;top:697.44px;font-size:12px;line-height:12px;color:#000;transform-origin:0 0;transform:scaleX(0.875)">7</div>
<div class="t" style="left:79.40px;top:697.44px;font-size:12px;line-height:12px;color:#000;transform-origin:0 0;transform:scaleX(0.875)">7</div>
<div class="t" style="left:108.20px;top:697.44px;font-size:12px;line-height:12px;color:#000;transform-origin:0 0;transform:scaleX(0.875)">Information Services</div>
<div class="t" style="left:220.50px;top:697.44px;font-size:12px;line-height:12px;color:#000;transform-origin:0 0;transform:scaleX(0.875)">39.6635</div>
<div class="t" style="left:274.90px;top:697.44px;font-size:12px;line-height:12px;color:#000;transform-origin:0 0;transform:scaleX(0.875)">Conroy</div>
<div class="t" style="left:347.30px;top:697.44px;font-size:12px;line-height:12px;color:#000;transform-origin:0 0;transform:scaleX(0.875)">Ajenstat</div>
<div class="t" style="left:45.90px;top:716.44px;font-size:12px;line-height:12px;color:#000;transform-origin:0 0;transform:scaleX(0.875)">8</div>
<div class="t" style="left:79.40px;top:716.44px;font-size:12px;line-height:12px;color:#000;transform-origin:0 0;transform:scaleX(0.875)">8</div>
<div class="t" style="left:108.20px;top:716.44px;font-size:12px;line-height:12px;color:#000;transform-origin:0 0;transform:scaleX(0.875)">Information Services</div>
<div class="t" style="left:220.50px;top:716.44px;font-size:12px;line-height:12px;color:#000;transform-origin:0 0;transform:scaleX(0.875)">38.4615</div>
<div class="t" style="left:274.90px;top:716.44px;font-size:12px;line-height:12px;color:#000;transform-origin:0 0;transform:scaleX(0.875)">Ajenstat</div>
<div class="t" style="left:347.30px;top:716.44px;font-size:12px;line-height:12px;color:#000;transform-origin:0 0;transform:scaleX(0.875)">Wilson</div>
<div class="t" style="left:45.90px;top:735.44px;font-size:12px;line-height:12px;color:#000;transform-origin:0 0;transform:scaleX(0.875)">9</div>
<div class="t" style="left:79.40px;top:735.44px;font-size:12px;line-height:12px;color:#000;transform-origin:0 0;transform:scaleX(0.875)">9</div>
<div class="t" style="left:108.20px;top:735.44px;font-size:12px;line-height:12px;color:#000;transform-origin:0 0;transform:scaleX(0.875)">Information Services</div>
<div class="t" style="left:220.50px;top:735.44px;font-size:12px;line-height:12px;color:#000;transform-origin:0 0;transform:scaleX(0.875)">38.4615</div>
<div class="t" style="left:274.90px;top:735.44px;font-size:12px;line-height:12px;color:#000;transform-origin:0 0;transform:scaleX(0.875)">Wilson</div>
<div class="t" style="left:347.30px;top:735.44px;font-size:12px;line-height:12px;color:#000;transform-origin:0 0;transform:scaleX(0.875)">Connelly</div>
<div class="t" style="left:45.90px;top:754.44px;font-size:12px;line-height:12px;color:#000;transform-origin:0 0;transform:scaleX(0.875)">10</div>
<div class="t" style="left:79.40px;top:754.44px;font-size:12px;line-height:12px;color:#000;transform-origin:0 0;transform:scaleX(0.875)">10</div>
<div class="t" style="left:108.20px;top:754.44px;font-size:12px;line-height:12px;color:#000;transform-origin:0 0;transform:scaleX(0.875)">Information Services</div>
<div class="t" style="left:220.50px;top:754.44px;font-size:12px;line-height:12px;color:#000;transform-origin:0 0;transform:scaleX(0.875)">32.4519</div>
<div class="t" style="left:274.90px;top:754.44px;font-size:12px;line-height:12px;color:#000;transform-origin:0 0;transform:scaleX(0.875)">Connelly</div>
<div class="t" style="left:347.30px;top:754.44px;font-size:12px;line-height:12px;color:#000;transform-origin:0 0;transform:scaleX(0.875)">Meyyappan</div>
<div class="t" style="left:45.90px;top:773.44px;font-size:12px;line-height:12px;color:#000;transform-origin:0 0;transform:scaleX(0.875)">11</div>
<div class="t" style="left:79.40px;top:773.44px;font-size:12px;line-height:12px;color:#000;transform-origin:0 0;transform:scaleX(0.875)">11</div>
<div class="t" style="left:108.20px;top:773.44px;font-size:12px;line-height:12px;color:#000;transform-origin:0 0;transform:scaleX(0.875)">Information Services</div>
<div class="t" style="left:220.50px;top:773.44px;font-size:12px;line-height:12px;color:#000;transform-origin:0 0;transform:scaleX(0.875)">32.4519</div>
<div class="t" style="left:274.90px;top:773.44px;font-size:12px;line-height:12px;color:#000;transform-origin:0 0;transform:scaleX(0.875)">Meyyappan</div>
<div class="t" style="left:347.30px;top:773.44px;font-size:12px;line-height:12px;color:#000;transform-origin:0 0;transform:scaleX(0.875)">0</div>
<div style="left:35px;top:795.5px;width:677px;height:26.5px;background:linear-gradient(#EEE28C 0,#EEE28C 85%,#FAE6A4 86%,#FAE6A4 100%);border-radius:0 0 3px 3px"></div>
<svg style="left:38px;top:798.5px" width="17" height="17" viewBox="0 0 17 17"><defs><radialGradient id="gck" cx="0.4" cy="0.35" r="0.7"><stop offset="0" stop-color="#9EE08A"/><stop offset="1" stop-color="#2F8F2F"/></radialGradient></defs><circle cx="8.2" cy="8.2" r="7.6" fill="url(#gck)" stroke="#2A6E2A" stroke-width=".8"/><path d="M4.3 8.6L7.2 11.4L12.3 5.2" stroke="#fff" stroke-width="2" fill="none"/></svg>
<div class="t" style="left:58.00px;top:801.22px;font-size:12.5px;line-height:12.5px;color:#111;letter-spacing:-0.587px;font-family:'Liberation Sans',monospace;">Query  exe...</div>
<div class="t" style="left:135.50px;top:801.22px;font-size:12.5px;line-height:12.5px;color:#111;letter-spacing:-0.512px;font-family:'Liberation Sans',monospace;">(LocalDb)\v11.0 (11.0 SP1)</div>
<div class="t" style="left:284.50px;top:801.22px;font-size:12.5px;line-height:12.5px;color:#111;letter-spacing:-0.559px;font-family:'Liberation Sans',monospace;">SSW2000\DorbenZhang (54)</div>
<div class="t" style="left:445.50px;top:801.22px;font-size:12.5px;line-height:12.5px;color:#111;letter-spacing:-0.188px;font-family:'Liberation Sans',monospace;">aspnet-WebApplication4...</div>
<div class="t" style="left:599.00px;top:801.22px;font-size:12.5px;line-height:12.5px;color:#111;letter-spacing:-0.720px;font-family:'Liberation Sans',monospace;">00:00:00</div>
<div class="t" style="left:654.00px;top:801.22px;font-size:12.5px;line-height:12.5px;color:#111;letter-spacing:-0.335px;font-family:'Liberation Sans',monospace;">11 rows</div>
<div style="left:129px;top:800px;width:1px;height:14px;background:#C4C4D4"></div>
<div style="left:130px;top:800px;width:1px;height:14px;background:#FFFFFF"></div>
<div style="left:279px;top:800px;width:1px;height:14px;background:#C4C4D4"></div>
<div style="left:280px;top:800px;width:1px;height:14px;background:#FFFFFF"></div>
<div style="left:440px;top:800px;width:1px;height:14px;background:#C4C4D4"></div>
<div style="left:441px;top:800px;width:1px;height:14px;background:#FFFFFF"></div>
<div style="left:593px;top:800px;width:1px;height:14px;background:#C4C4D4"></div>
<div style="left:594px;top:800px;width:1px;height:14px;background:#FFFFFF"></div>
<div style="left:649px;top:800px;width:1px;height:14px;background:#C4C4D4"></div>
<div style="left:650px;top:800px;width:1px;height:14px;background:#FFFFFF"></div>
<div style="left:156.4px;top:55px;width:1px;height:18px;background:#8D99AE"></div>
<div style="left:341.3px;top:55px;width:1px;height:18px;background:#8D99AE"></div>
<div style="left:414.5px;top:55px;width:1px;height:18px;background:#8D99AE"></div>
<div style="left:546.4px;top:55px;width:1px;height:18px;background:#8D99AE"></div>
<div style="left:575.5px;top:55px;width:1px;height:18px;background:#8D99AE"></div>
<div style="left:68.2px;top:80px;width:1px;height:18px;background:#8D99AE"></div>
<div style="left:241.5px;top:80px;width:1px;height:18px;background:#8D99AE"></div>
<div style="left:495.3px;top:80px;width:1px;height:18px;background:#8D99AE"></div>
<div style="left:546.7px;top:80px;width:1px;height:18px;background:#8D99AE"></div>
<div style="left:620px;top:80px;width:1px;height:18px;background:#8D99AE"></div>
<div style="left:670.6px;top:80px;width:1px;height:18px;background:#8D99AE"></div>
<div style="left:721.5px;top:80px;width:1px;height:18px;background:#8D99AE"></div>
<div style="left:316px;top:53.3px;width:22px;height:21.5px;background:linear-gradient(#FFFBEA,#FFEBB5);border:1px solid #E5C365"></div>
<div style="left:470.3px;top:78.3px;width:21.3px;height:21.2px;background:linear-gradient(#FFFBEA,#FFEBB5);border:1px solid #E5C365"></div>
<div style="left:572px;top:78.3px;width:21.9px;height:21.2px;background:linear-gradient(#FFFBEA,#FFEBB5);border:1px solid #E5C365"></div>
<div style="left:75.4px;top:79.4px;width:159px;height:19px;background:#fff;border:1px solid #9AA5B8"></div>
<div style="left:76.4px;top:80.4px;width:145.5px;height:17px;overflow:hidden"><div class="t" style="left:2px;top:2.6px;font-size:12px;line-height:12px;color:#111;letter-spacing:0.06px">aspnet-WebApplication4identity2</div></div>
<div style="left:604.6px;top:54.8px;width:89px;height:18.5px;background:#D6DCE6;border:1px solid #A9B3C4"></div>
<div class="t" style="left:183.20px;top:58.32px;font-size:12.5px;line-height:12.5px;color:#1E1E3A;letter-spacing:-0.391px;font-family:'Liberation Sans',monospace;">New Query</div>
<div class="t" style="left:267.80px;top:82.72px;font-size:12.5px;line-height:12.5px;color:#1E1E3A;letter-spacing:-0.782px;font-family:'Liberation Sans',monospace;">Execute</div>
<div class="t" style="left:339.10px;top:82.72px;font-size:12.5px;line-height:12.5px;color:#1E1E3A;letter-spacing:-0.409px;font-family:'Liberation Sans',monospace;">Debug</div>
<svg style="left:0;top:0" width="747" height="103" viewBox="0 0 747 103"><path d="M45 62.5h6l-3.0 3.0z" fill="#1C2A48"/><path d="M78 62.5h6l-3.0 3.0z" fill="#8E96A4"/><path d="M444 63.5h6l-3.0 3.0z" fill="#1C2A48"/><path d="M479 63.5h6l-3.0 3.0z" fill="#8E96A4"/><path d="M512 63.5h6l-3.0 3.0z" fill="#1C2A48"/><path d="M685.3 63h6l-3.0 3.0z" fill="#A8AFBA"/><path d="M226.7 88h6l-3.0 3.0z" fill="#1C2A48"/><rect x="27.5" y="57.5" width="12" height="12" fill="#F2F5FC" stroke="#26365E"/><rect x="28" y="58" width="11" height="2.5" fill="#5A8AE0"/><path d="M28 58 v11" stroke="#E5A51A" stroke-width="1.2"/><path d="M24 60h8M28 56v8M25.2 57.2l5.6 5.6M30.8 57.2l-5.6 5.6" stroke="#F8C820" stroke-width="1.1"/><circle cx="28" cy="60" r="1.8" fill="#FFF6B0"/><rect x="26.5" y="63.5" width="7" height="8" fill="#F4F6FC" stroke="#2A3A62"/><path d="M28 65.5h4M28 67.5h4M28 69.5h4" stroke="#4D7FD8"/><rect x="58.5" y="60.5" width="14" height="9.5" fill="#D5D8DE" stroke="#B4B9C2"/><path d="M61 64h2M65 64h2M69 64h2M61 67h2M65 67h2M69 67h2" stroke="#9299A5" stroke-width="1.4"/><path d="M58 58.5h5M60.5 56v5M58.8 56.8l3.4 3.4M62.2 56.8l-3.4 3.4" stroke="#E6E8EC" stroke-width=".8"/><path d="M90.5 60.5h5l1 1.5h6v8.5h-12z" fill="#E8C25A" stroke="#9C7A2A"/><path d="M91 70.5l2.5-6.5h13l-2.5 6.5z" fill="#F8D060" stroke="#A08030"/><path d="M98 60 q3-3.5 6-1" stroke="#3A74C8" stroke-width="1.6" fill="none"/><path d="M103 57l2.5 2.5l-3 1z" fill="#3A74C8"/><rect x="113.5" y="57.5" width="13" height="13" rx="1" fill="#5656B8" stroke="#3A3A8E"/><rect x="116" y="58" width="8.5" height="6" fill="#F4F6FC"/><rect x="117" y="66" width="6.5" height="4.5" fill="#303050"/><rect x="120.5" y="67" width="2" height="2.5" fill="#E0E0F0"/><rect x="139.5" y="57" width="9.5" height="9" fill="#5A5ABC" stroke="#3A3A8E" stroke-width=".8"/><rect x="141" y="58" width="6" height="1.5" fill="#F0F0FA"/><rect x="137.5" y="59" width="9.5" height="9" fill="#5A5ABC" stroke="#3A3A8E" stroke-width=".8"/><rect x="139" y="60" width="6" height="1.5" fill="#F0F0FA"/><rect x="135.5" y="61" width="10" height="9.5" fill="#5656B8" stroke="#3A3A8E" stroke-width=".8"/><rect x="137.2" y="62" width="6.3" height="3.5" fill="#F4F6FC"/><rect x="138" y="67" width="5" height="3" fill="#303050"/><path d="M165.5 57.5h7l3 3v8h-10z" fill="#F6F7FA" stroke="#4A5470"/><path d="M165.5 60.5v8h10" fill="none" stroke="#8A90A0"/><circle cx="167" cy="59.5" r="3.4" fill="#FFD83A"/><path d="M163.5 59.5h7M167 56v7" stroke="#F5B800" stroke-width=".8"/><path d="M163 70.5h16" stroke="#C07A10" stroke-width="1.3" stroke-dasharray="2 1"/><path d="M170.5 68.5v2" stroke="#333"/><path d="M169.5 70l1-1.5 1 1.5z" fill="#F5C000"/><path d="M255.0 57.5h7l3 3v10h-10z" fill="#EEF2FA" stroke="#4A5A80"/><path d="M255.5 69h9" stroke="#B8C4DC"/><rect x="261.5" y="62.5" width="6.5" height="8.5" fill="#E8B030" stroke="#9A6E10"/><ellipse cx="264.75" cy="62.5" rx="3.25" ry="1.3" fill="#FFE07A" stroke="#9A6E10" stroke-width=".7"/><path d="M276.5 57.5h7l3 3v10h-10z" fill="#EEF2FA" stroke="#4A5A80"/><path d="M277 69h9" stroke="#B8C4DC"/><g fill="#2A6CD0"><rect x="276" y="61" width="1" height="1"/><rect x="278" y="61" width="1" height="1"/><rect x="276" y="62" width="1" height="1"/><rect x="277" y="62" width="1" height="1"/><rect x="278" y="62" width="1" height="1"/><rect x="276" y="63" width="1" height="1"/><rect x="278" y="63" width="1" height="1"/><rect x="276" y="64" width="1" height="1"/><rect x="278" y="64" width="1" height="1"/><rect x="280" y="61" width="1" height="1"/><rect x="281" y="61" width="1" height="1"/><rect x="280" y="62" width="1" height="1"/><rect x="282" y="62" width="1" height="1"/><rect x="280" y="63" width="1" height="1"/><rect x="282" y="63" width="1" height="1"/><rect x="280" y="64" width="1" height="1"/><rect x="281" y="64" width="1" height="1"/><rect x="284" y="61" width="1" height="1"/><rect x="286" y="61" width="1" height="1"/><rect x="285" y="62" width="1" height="1"/><rect x="285" y="63" width="1" height="1"/><rect x="284" y="64" width="1" height="1"/><rect x="286" y="64" width="1" height="1"/></g><circle cx="287.5" cy="67.5" r="4" fill="#F2C820" stroke="#8A6A00" stroke-width=".8"/><ellipse cx="287.5" cy="65.9" rx="3" ry="1.4" fill="#FFF090"/><path d="M298.5 57.5h7l3 3v10h-10z" fill="#EEF2FA" stroke="#4A5A80"/><path d="M299 69h9" stroke="#B8C4DC"/><g fill="#C030C0"><rect x="298" y="61" width="1" height="1"/><rect x="299" y="61" width="1" height="1"/><rect x="298" y="62" width="1" height="1"/><rect x="300" y="62" width="1" height="1"/><rect x="298" y="63" width="1" height="1"/><rect x="300" y="63" width="1" height="1"/><rect x="298" y="64" width="1" height="1"/><rect x="299" y="64" width="1" height="1"/><rect x="302" y="61" width="1" height="1"/><rect x="304" y="61" width="1" height="1"/><rect x="302" y="62" width="1" height="1"/><rect x="303" y="62" width="1" height="1"/><rect x="304" y="62" width="1" height="1"/><rect x="302" y="63" width="1" height="1"/><rect x="304" y="63" width="1" height="1"/><rect x="302" y="64" width="1" height="1"/><rect x="304" y="64" width="1" height="1"/><rect x="306" y="61" width="1" height="1"/><rect x="308" y="61" width="1" height="1"/><rect x="307" y="62" width="1" height="1"/><rect x="307" y="63" width="1" height="1"/><rect x="306" y="64" width="1" height="1"/><rect x="308" y="64" width="1" height="1"/></g><circle cx="309.5" cy="67.5" r="4" fill="#F2C820" stroke="#8A6A00" stroke-width=".8"/><ellipse cx="309.5" cy="65.9" rx="3" ry="1.4" fill="#FFF090"/><path d="M320.5 57.5h7l3 3v10h-10z" fill="#EEF2FA" stroke="#4A5A80"/><path d="M321 69h9" stroke="#B8C4DC"/><g fill="#30A060"><rect x="320" y="57" width="1" height="1"/><rect x="322" y="57" width="1" height="1"/><rect x="321" y="58" width="1" height="1"/><rect x="321" y="59" width="1" height="1"/><rect x="320" y="60" width="1" height="1"/><rect x="322" y="60" width="1" height="1"/><rect x="324" y="57" width="1" height="1"/><rect x="326" y="57" width="1" height="1"/><rect x="324" y="58" width="1" height="1"/><rect x="325" y="58" width="1" height="1"/><rect x="326" y="58" width="1" height="1"/><rect x="324" y="59" width="1" height="1"/><rect x="326" y="59" width="1" height="1"/><rect x="324" y="60" width="1" height="1"/><rect x="326" y="60" width="1" height="1"/></g><g fill="#30A060"><rect x="320" y="63" width="1" height="1"/><rect x="320" y="64" width="1" height="1"/><rect x="320" y="65" width="1" height="1"/><rect x="320" y="66" width="1" height="1"/><rect x="321" y="66" width="1" height="1"/><rect x="322" y="66" width="1" height="1"/><rect x="325" y="63" width="1" height="1"/><rect x="324" y="64" width="1" height="1"/><rect x="326" y="64" width="1" height="1"/><rect x="324" y="65" width="1" height="1"/><rect x="325" y="65" width="1" height="1"/><rect x="326" y="65" width="1" height="1"/><rect x="324" y="66" width="1" height="1"/><rect x="326" y="66" width="1" height="1"/></g><circle cx="331" cy="67.5" r="4" fill="#F2C820" stroke="#8A6A00" stroke-width=".8"/><ellipse cx="331" cy="65.9" rx="3" ry="1.4" fill="#FFF090"/><path d="M352 57l4.5 8M359 57l-4.5 8" stroke="#8A8F98" stroke-width="1.4"/><circle cx="352.8" cy="67.6" r="2.3" fill="none" stroke="#2B5FC8" stroke-width="1.6"/><circle cx="358" cy="67.6" r="2.3" fill="none" stroke="#2B5FC8" stroke-width="1.6"/><path d="M370.5 57.5h6l2 2v6h-8z" fill="#F4F6FC" stroke="#3A4A78"/><path d="M372 59.5h4M372 61.5h4" stroke="#4A7AD8"/><path d="M375.5 61.5h6.5l2.5 2.5v6h-9z" fill="#F4F6FC" stroke="#3A4A78"/><path d="M377 64.5h5.5M377 66.5h5.5M377 68.5h5.5" stroke="#4A7AD8" stroke-width="1"/><rect x="392.5" y="58.5" width="11" height="12" fill="#C9CDD4" stroke="#A8ADB6"/><rect x="395.5" y="57" width="5" height="3" fill="#B8BDC6" stroke="#A0A5AE" stroke-width=".7"/><rect x="398.5" y="63.5" width="9" height="7.5" fill="#E4E6EA" stroke="#A8ADB6"/><path d="M400 66h5M400 68.5h5" stroke="#A8ADB6"/><path d="M425 62.5 q4-4 8 0 q2.5 3-1 7" stroke="#2E6CD0" stroke-width="2.2" fill="none"/><path d="M422.5 59v6h6z" fill="#2E6CD0"/><path d="M467.5 62.5 q-4-4-8 0 q-2.5 3 1 7" stroke="#A6ABB4" stroke-width="2.2" fill="none"/><path d="M470 59v6h-6z" fill="#A6ABB4"/><rect x="496.5" y="57.5" width="10" height="9.5" fill="#F6F8FC" stroke="#2A3A68"/><path d="M498 59.5h6M498 61.5h6M498 63.5h4" stroke="#3A6ED8"/><path d="M491 67.5l3.5-3v1.8h6v2.5h-6v1.8z" fill="#2F6FD8" stroke="#1E4EA8" stroke-width=".5"/><rect x="524.5" y="57.5" width="10" height="9.5" fill="#E6E8EC" stroke="#A4AAB4"/><path d="M526 59.5h6M526 61.5h6M526 63.5h4" stroke="#A4AAB4"/><path d="M540.5 67.5l-3.5-3v1.8h-6v2.5h6v1.8z" fill="#A8ADB6"/><rect x="554" y="58" width="14" height="11" fill="#EEF4FA"/><path d="M554 60.5h14M554 63.5h14M554 66.5h14M557.5 58v11M561.5 58v11M565.5 58v11" stroke="#A8C0E0" stroke-width=".7"/><path d="M553.5 57.5v12h14" stroke="#1E2A48" fill="none"/><path d="M555 60l4 5 3-2 5 4" stroke="#3A6AD8" stroke-width="1.1" fill="none"/><path d="M554.5 66l4-4 3 3 5-5" stroke="#2FA040" stroke-width="1.3" fill="none"/><path d="M564.5 68.5l2 2 3.5-4" stroke="#1E7A20" stroke-width="1.8" fill="none"/><path d="M587 58.5v11.2l6.4-5.6z" fill="#24A030" stroke="#167A20" stroke-width=".6"/><path d="M700.8 55.8v4l2.2-2z M705.3 55.8v4l2.2-2z" fill="#222"/><rect x="700.8" y="65.3" width="7" height="1.5" fill="#222"/><path d="M700.8 68.3h7l-3.5 3z" fill="#222"/><path d="M729.5 80.8v4l2.2-2z M734.0 80.8v4l2.2-2z" fill="#222"/><rect x="729.5" y="90.3" width="7" height="1.5" fill="#222"/><path d="M729.5 93.3h7l-3.5 3z" fill="#222"/><rect x="24.5" y="82.5" width="9.5" height="8" fill="#D0D3D8" stroke="#A9AEB6"/><rect x="26" y="84" width="6.5" height="5" fill="#B4B8C0"/><rect x="24" y="91" width="10.5" height="2.5" fill="#C8CBD1" stroke="#A9AEB6" stroke-width=".7"/><rect x="35.5" y="82.5" width="4" height="7" fill="#D4D7DC" stroke="#A9AEB6" stroke-width=".8"/><path d="M28 94v2.5h9.5v-6" stroke="#A5AAB2" fill="none"/><path d="M35.5 91.5l2-2 2 2z" fill="#A5AAB2"/><rect x="46.5" y="81.5" width="4.5" height="7.5" rx="1.2" fill="#F2F4F8" stroke="#4A5878"/><rect x="47" y="82" width="3.5" height="2" fill="#BAC6DC"/><rect x="49.2" y="87.2" width="1.5" height="1.5" fill="#30B030"/><rect x="51.5" y="85.5" width="4.5" height="7.5" rx="1.2" fill="#F2F4F8" stroke="#4A5878"/><rect x="52" y="86" width="3.5" height="2" fill="#BAC6DC"/><rect x="54.2" y="91.2" width="1.5" height="1.5" fill="#30B030"/><rect x="57.5" y="81.5" width="4.5" height="7.5" rx="1.2" fill="#F2F4F8" stroke="#4A5878"/><rect x="58" y="82" width="3.5" height="2" fill="#BAC6DC"/><rect x="60.2" y="87.2" width="1.5" height="1.5" fill="#E04020"/><path d="M48.3 89v6h5M53.3 93v2" stroke="#1E9A1E" stroke-width="1.2" fill="none"/><path d="M53.5 95h4" stroke="#E83020" stroke-width="1.2"/><path d="M59.3 89v3" stroke="#E83020" stroke-width="1.2"/><path d="M57 92.5l4.5 4M61.5 92.5l-4.5 4" stroke="#F02A10" stroke-width="1.6"/><path d="M252 82.5h4l-1.3 7.5h-1.4z" fill="#E0321E" stroke="#A02010" stroke-width=".5"/><circle cx="254" cy="93" r="1.4" fill="#E0321E"/><path d="M324 83v11l6.3-5.5z" fill="#30A030" stroke="#1A6E1A" stroke-width=".7"/><rect x="388.5" y="84" width="8.5" height="8.2" fill="#A8ACB3" stroke="#9A9EA6"/><path d="M409 89.5l4 3.8 8.5-8.5" stroke="#3A6FD8" stroke-width="2.2" fill="none"/><rect x="430.5" y="82" width="4.5" height="4.5" fill="#4A9AE8" stroke="#2A5EA8" stroke-width=".7"/><rect x="440.5" y="82" width="4.5" height="4.5" fill="#4A9AE8" stroke="#2A5EA8" stroke-width=".7"/><path d="M436 84.3h4" stroke="#333" stroke-width=".8"/><rect x="430.5" y="92" width="4.5" height="4.5" fill="#30C030" stroke="#208020" stroke-width=".7"/><path d="M432.8 88v3.5" stroke="#333" stroke-width=".8"/><path d="M437.5 89.5h7.5v5l-3 2.5h-4.5z" fill="#F4F6FA" stroke="#3A4460"/><rect x="457.5" y="82" width="9.5" height="7" fill="#EDF1F8" stroke="#8A9ABA" stroke-width=".8"/><rect x="457.5" y="82" width="9.5" height="2" fill="#B8C8E6"/><rect x="454.5" y="85.5" width="9" height="6.5" fill="#E8EEF8" stroke="#5A6A90" stroke-width=".8"/><rect x="455" y="86" width="8" height="2" fill="#3A5A98"/><rect x="452.5" y="88.5" width="8" height="7" fill="#EEF2F8" stroke="#9AAAC8" stroke-width=".8"/><path d="M454 92h5M454 94h5" stroke="#B0BCD4"/><rect x="476.5" y="81.5" width="11.5" height="14.5" fill="#F6F8FC" stroke="#34436A"/><path d="M478.5 83.5h7.5M478.5 85.5h7.5M478.5 87.5h7.5" stroke="#98A8C4" stroke-width=".9"/><rect x="477" y="89.5" width="10.5" height="6" fill="#4A5A84"/><path d="M480.5 91.5h5.5M480.5 93.5h5.5" stroke="#E8EEF8" stroke-width=".9"/><path d="M478.5 91.5h1M478.5 93.5h1" stroke="#E8EEF8" stroke-width=".9"/><rect x="503" y="82" width="5" height="5" fill="#4A9AE8" stroke="#2A5EA8" stroke-width=".7"/><rect x="513" y="82" width="5" height="5" fill="#4A9AE8" stroke="#2A5EA8" stroke-width=".7"/><path d="M508.5 84.5h4" stroke="#333" stroke-width=".8"/><path d="M510 83l-1.5 1.5 1.5 1.5" stroke="#333" fill="none" stroke-width=".8"/><rect x="503" y="91.5" width="5" height="5" fill="#30C030" stroke="#208020" stroke-width=".7"/><path d="M505.5 87.5v3.5" stroke="#333" stroke-width=".8"/><rect x="524" y="84" width="2" height="6" fill="#30A040"/><rect x="526.5" y="82" width="2" height="8" fill="#3060C0"/><rect x="529" y="83" width="2" height="7" fill="#C04080"/><rect x="531.5" y="82" width="2" height="5" fill="#8A8A8A"/><rect x="530.5" y="86.5" width="9.5" height="8" fill="#3A8AE8" stroke="#1E4A90"/><rect x="532" y="95" width="7" height="1.5" fill="#8A94A8"/><rect x="553" y="81.5" width="1" height="4" fill="#222"/><rect x="555.5" y="82.0" width="2" height="3" fill="none" stroke="#222" stroke-width="1"/><rect x="559" y="81.5" width="1" height="4" fill="#222"/><rect x="561.5" y="82.0" width="2" height="3" fill="none" stroke="#222" stroke-width="1"/><rect x="553.5" y="86.0" width="2" height="3" fill="none" stroke="#222" stroke-width="1"/><rect x="557" y="85.5" width="1" height="4" fill="#222"/><path d="M558.5 86.5h6l3 3v7h-9z" fill="#F4F6FA" stroke="#3A4460"/><path d="M564.5 86.5v3h3" fill="#D8DEEA" stroke="#3A4460"/><path d="M560 90.5h5M560 92.5h5.5M560 94.5h5.5" stroke="#3A4460"/><path d="M554.5 89 q-1 5 4 5.5" stroke="#2E6CD0" stroke-width="2" fill="none"/><path d="M558 91.5l3.5 3-3.5 3z" fill="#2E6CD0"/><rect x="576" y="81.5" width="1" height="4" fill="#222"/><rect x="578.5" y="82.0" width="2" height="3" fill="none" stroke="#222" stroke-width="1"/><rect x="582" y="81.5" width="1" height="4" fill="#222"/><rect x="584.5" y="82.0" width="2" height="3" fill="none" stroke="#222" stroke-width="1"/><rect x="576.5" y="86.0" width="2" height="3" fill="none" stroke="#222" stroke-width="1"/><rect x="580" y="85.5" width="1" height="4" fill="#222"/><rect x="580.5" y="85.5" width="11" height="11" fill="#F0F4FA" stroke="#6A7894"/><path d="M581 88.5h10M581 91.5h10M581 94.5h10M584.5 86v10M588 86v10" stroke="#8A98B4" stroke-width=".8"/><rect x="588.5" y="92" width="2.5" height="4" fill="#B8CCE8"/><path d="M577.5 89 q-1 5 4 5.5" stroke="#2E6CD0" stroke-width="2" fill="none"/><path d="M581 91.5l3.5 3-3.5 3z" fill="#2E6CD0"/><rect x="598" y="81.5" width="1" height="4" fill="#222"/><rect x="600.5" y="82.0" width="2" height="3" fill="none" stroke="#222" stroke-width="1"/><rect x="604" y="81.5" width="1" height="4" fill="#222"/><rect x="606.5" y="82.0" width="2" height="3" fill="none" stroke="#222" stroke-width="1"/><rect x="598.5" y="86.0" width="2" height="3" fill="none" stroke="#222" stroke-width="1"/><rect x="602" y="85.5" width="1" height="4" fill="#222"/><path d="M603.5 86.5h6l3 3v7h-9z" fill="#F4F6FA" stroke="#3A4460"/><path d="M609.5 86.5v3h3" fill="#D8DEEA" stroke="#3A4460"/><path d="M599.5 89 q-1 5 4 5.5" stroke="#2E6CD0" stroke-width="2" fill="none"/><path d="M603 91.5l3.5 3-3.5 3z" fill="#2E6CD0"/><path d="M627 83.5h13" stroke="#6A6E76" stroke-width="1.5"/><path d="M630 86.5h10M630 89.5h10" stroke="#C4C8CE" stroke-width="1.5"/><path d="M627 92.5h13M627 95.5h13" stroke="#6A6E76" stroke-width="1.5"/><path d="M652.5 84.5 q3-3 6 0 q2 3-2 5" stroke="#6A6E76" stroke-width="1.3" fill="none"/><path d="M650 82.5v4h4z" fill="#6A6E76"/><path d="M655 89.5h8" stroke="#C4C8CE" stroke-width="1.5"/><path d="M650 92.5h13M650 95.5h13" stroke="#6A6E76" stroke-width="1.5"/><path d="M684 82v15" stroke="#444" stroke-width=".8" stroke-dasharray="1 1"/><path d="M680 84h13M680 94h13M680 96h4" stroke="#6A6E76" stroke-width="1.1"/><path d="M685 87h8M685 90h6" stroke="#3A3E46" stroke-width="1.8"/><path d="M682 88.5h-4l2-2M678 88.5l2 2" stroke="#9AA0AA" stroke-width="1.2" fill="none"/><path d="M706 82v15" stroke="#444" stroke-width=".8" stroke-dasharray="1 1"/><path d="M702 84h13M702 94h13M702 96h4" stroke="#6A6E76" stroke-width="1.1"/><path d="M707 87h8M707 90h6" stroke="#3A3E46" stroke-width="1.8"/><path d="M699 88.5h4l-2-2M703 88.5l-2 2" stroke="#9AA0AA" stroke-width="1.2" fill="none"/></svg></body></html>
